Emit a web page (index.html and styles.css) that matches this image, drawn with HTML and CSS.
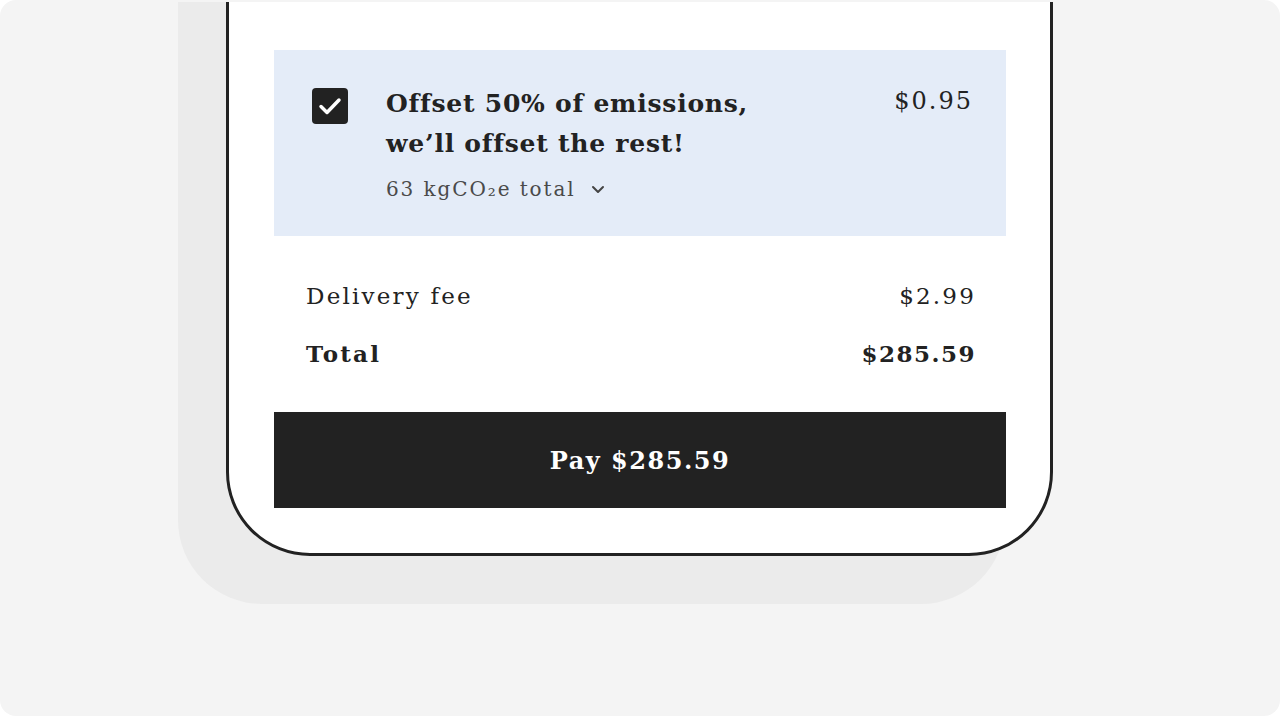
FILE: index.html
```html
<!DOCTYPE html>
<html lang="en">
<head>
<meta charset="UTF-8">
<meta name="viewport" content="width=device-width, initial-scale=1.0">
<title>Checkout</title>
<link rel="stylesheet" href="styles.css">
</head>
<body>

<div class="frame">
    <div class="stage">
        <div class="phone">
            <div class="offset-card">
                <div class="checkbox">
                    <svg width="36" height="36" viewBox="0 0 36 36">
                        <path d="M9 18.5 L15 24.5 L27 12" fill="none" stroke="#fff" stroke-width="3.5" stroke-linecap="round" stroke-linejoin="round"/>
                    </svg>
                </div>
                <div class="offset-text">
                    <h2 class="offset-title">Offset 50% of emissions, we’ll offset the rest!</h2>
                    <div class="offset-sub">63 kgCO₂e total
                        <svg class="chevron" width="14" height="10" viewBox="0 0 14 10">
                            <path d="M2 3 L7 8 L12 3" fill="none" stroke="#444" stroke-width="2" stroke-linecap="round" stroke-linejoin="round"/>
                        </svg>
                    </div>
                </div>
                <div class="offset-price">$0.95</div>
            </div>

            <div class="summary">
                <div class="row">
                    <span>Delivery fee</span>
                    <span>$2.99</span>
                </div>
                <div class="row total">
                    <span>Total</span>
                    <span>$285.59</span>
                </div>
            </div>

            <button class="pay-button">Pay $285.59</button>
        </div>
    </div>
</div>

</body>
</html>
```

FILE: styles.css
```css
body {
    margin: 0;
    background-color: #fff;
    font-family: "DejaVu Serif", "Liberation Serif", serif;
    color: #222;
}

.frame {
    width: 1280px;
    height: 716px;
    background-color: #f4f4f4;
    border-radius: 16px;
    padding-top: 2px;
    box-sizing: border-box;
    overflow: hidden;
}

.stage {
    height: 714px;
    overflow: hidden;
    padding-left: 226px;
}

.phone {
    width: 827px;
    box-sizing: border-box;
    margin-top: -100px;
    padding: 145px 44px 45px 45px;
    background-color: #fff;
    border: 3px solid #222;
    border-radius: 0 0 84px 84px;
    box-shadow: -48px 48px 0 0 #ebebeb; /* flat offset shadow */
}

.offset-card {
    display: flex;
    align-items: flex-start;
    background-color: #e4ecf8;
    padding: 38px 33px 35px 38px;
}

.checkbox {
    width: 36px;
    height: 36px;
    background-color: #222;
    border-radius: 4px;
    flex-shrink: 0;
    margin-right: 38px;
}

.checkbox svg {
    display: block;
}

.offset-text {
    flex: 1;
}

.offset-title {
    margin: -4px 0 0 0;
    font-size: 25px;
    line-height: 40px;
    font-weight: bold;
    letter-spacing: 0.75px;
    max-width: 400px;
}

.offset-sub {
    margin-top: 13px;
    font-size: 20px;
    letter-spacing: 1.9px;
    color: #4a4a4a;
    display: flex;
    align-items: center;
}

.chevron {
    margin-left: 15px;
}

.offset-price {
    font-size: 24px;
    line-height: 26px;
    letter-spacing: 2px;
}

.summary {
    padding: 44px 32px 42px 32px;
}

.row {
    display: flex;
    justify-content: space-between;
    font-size: 23px;
    line-height: 32px;
    letter-spacing: 2.2px;
}

.row span:last-child {
    margin-right: -2px;
}

.row + .row {
    margin-top: 26px;
}

.row.total {
    font-weight: bold;
}

.row.total span:last-child {
    letter-spacing: 1.5px;
}

.pay-button {
    display: block;
    width: 100%;
    height: 96px;
    border: none;
    background-color: #222;
    color: #fff;
    font-family: "DejaVu Serif", "Liberation Serif", serif;
    font-size: 24px;
    font-weight: bold;
    letter-spacing: 1.5px;
}
```
